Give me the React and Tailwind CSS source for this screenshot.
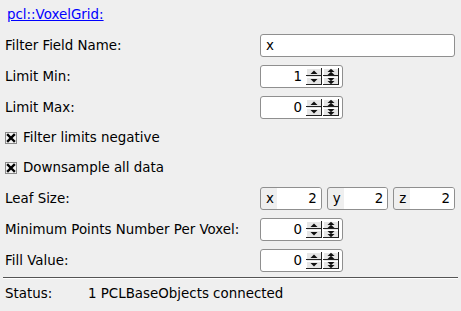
import React from "react";

function SpinButtons() {
  return (
    <svg width="34" height="17" viewBox="0 0 34 17" className="shrink-0">
      {[0, 17].map((x) => (
        <g key={x}>
          <rect x={x} y="0" width="16" height="17" fill="#e6e6e6" />
          <line x1={x} y1="0.5" x2={x + 16} y2="0.5" stroke="#ffffff" />
          <line x1={x + 0.5} y1="0" x2={x + 0.5} y2="17" stroke="#ffffff" />
          <line x1={x} y1="7.5" x2={x + 16} y2="7.5" stroke="#222" />
          <line x1={x} y1="9.5" x2={x + 16} y2="9.5" stroke="#ffffff" />
          <line x1={x} y1="16.5" x2={x + 16} y2="16.5" stroke="#222" />
          <line x1={x + 15.5} y1="0" x2={x + 15.5} y2="17" stroke="#222" />
        </g>
      ))}
      <polygon points="4.5,6 11.5,6 8,2.5" fill="#111" />
      <polygon points="4.5,11 11.5,11 8,14.5" fill="#111" />
      <polygon points="21.5,4 28.5,4 25,0.8" fill="#111" />
      <polygon points="21.5,7 28.5,7 25,3.8" fill="#111" />
      <polygon points="21.5,10 28.5,10 25,13.2" fill="#111" />
      <polygon points="21.5,13 28.5,13 25,16.2" fill="#111" />
    </svg>
  );
}

function SpinBox({ value }) {
  return (
    <div className="flex h-[23px] w-[83px] items-stretch rounded-[3px] border border-[#8f8f8f] bg-white">
      <div className="flex flex-1 items-center justify-end pr-[4px]">{value}</div>
      <div className="flex items-start pt-[2px] pr-[2px]">
        <SpinButtons />
      </div>
    </div>
  );
}

function Checkbox({ label }) {
  return (
    <div className="flex h-[22px] items-center">
      <div className="flex h-[12px] w-[12px] items-center justify-center border border-[#8a8a8a] bg-[#f4f4f4]">
        <svg width="10" height="10" viewBox="0 0 10 10">
          <path d="M2 2 L8 8 M8 2 L2 8" stroke="#000" strokeWidth="2.4" strokeLinecap="square" />
        </svg>
      </div>
      <span className="ml-[6px]">{label}</span>
    </div>
  );
}

function LeafBox({ axis, value }) {
  return (
    <div className="flex h-[23px] flex-1 items-stretch overflow-hidden rounded-[3px] border border-[#8f8f8f]">
      <div className="flex w-[16px] items-center pl-[5px]">{axis}</div>
      <div className="flex flex-1 items-center justify-end bg-white pr-[4px]">{value}</div>
    </div>
  );
}

function Row({ label, children }) {
  return (
    <div className="grid h-[23px] grid-cols-[255px_1fr] items-center">
      <div className="whitespace-nowrap">{label}</div>
      <div className="flex items-center">{children}</div>
    </div>
  );
}

export default function App() {
  return (
    <div
      className="flex h-[311px] w-[461px] flex-col bg-[#efefef] text-[13.4px] leading-[16px] text-black"
      style={{ fontFamily: '"DejaVu Sans", sans-serif' }}
    >
      <div className="flex flex-col px-[5px] pr-[6px]">
        <div className="pt-[7px] pl-[2px]">
          <span className="text-[#0000ff] underline">pcl::VoxelGrid:</span>
        </div>
        <div className="mt-[11px] flex flex-col gap-[8px]">
          <Row label="Filter Field Name:">
            <div className="flex h-[23px] w-full items-center rounded-[3px] border border-[#8f8f8f] bg-white pl-[5px]">
              x
            </div>
          </Row>
          <Row label="Limit Min:">
            <SpinBox value="1" />
          </Row>
          <Row label="Limit Max:">
            <SpinBox value="0" />
          </Row>
          <Checkbox label="Filter limits negative" />
          <Checkbox label="Downsample all data" />
          <Row label="Leaf Size:">
            <div className="flex w-full gap-[5px]">
              <LeafBox axis="x" value="2" />
              <LeafBox axis="y" value="2" />
              <LeafBox axis="z" value="2" />
            </div>
          </Row>
          <Row label="Minimum Points Number Per Voxel:">
            <SpinBox value="0" />
          </Row>
          <Row label="Fill Value:">
            <SpinBox value="0" />
          </Row>
        </div>
      </div>
      <div className="mx-[3px] mt-[5px] h-[2px] border-t border-[#555] border-b border-b-[#ffffff]" />
      <div className="flex flex-1 items-center px-[5px] pb-[2px]">
        <span className="w-[83px]">Status:</span>
        <span>1 PCLBaseObjects connected</span>
      </div>
    </div>
  );
}
